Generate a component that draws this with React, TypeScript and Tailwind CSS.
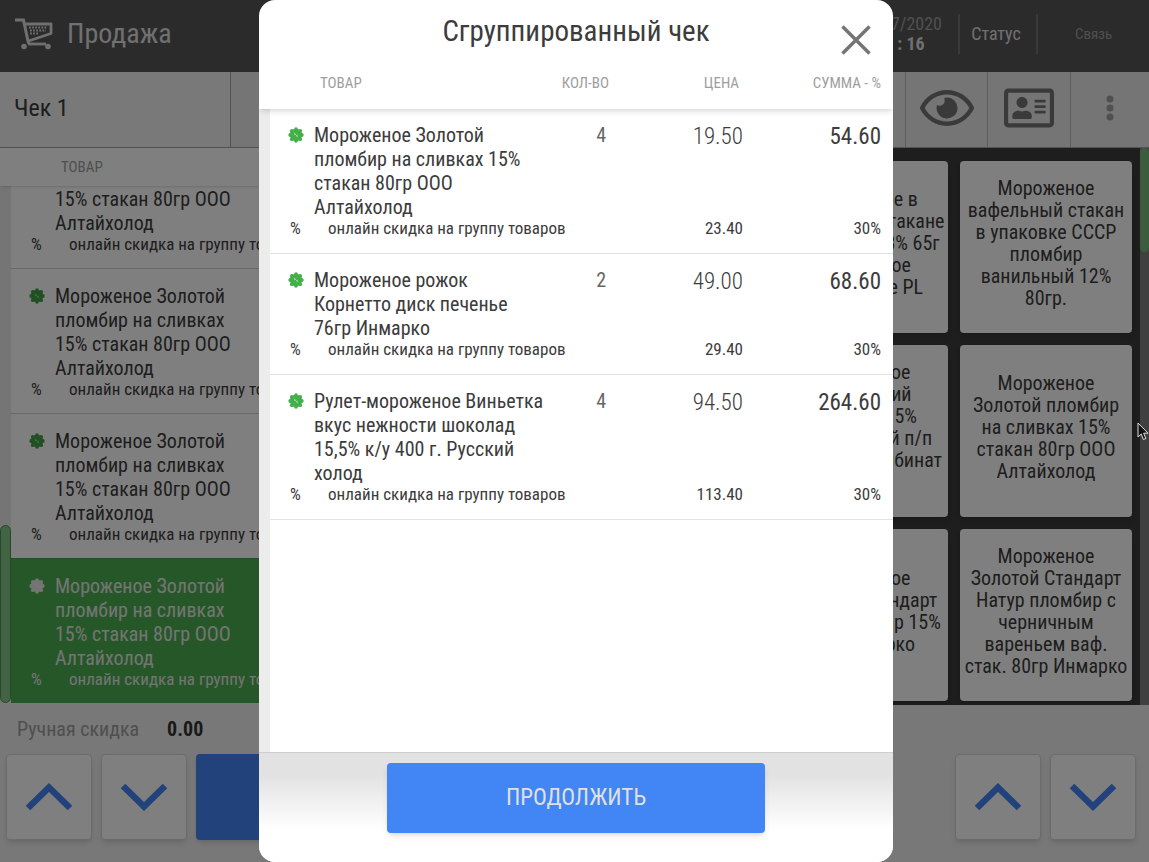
import { FaRegAddressCard, FaRegEye } from 'react-icons/fa';
import { clsx } from 'clsx';

type Item = {
  name: string;
  qty: string;
  price: string;
  total: string;
  discount: string;
};

const DISCOUNT_NAME = 'онлайн скидка на группу товаров';

const groupedItems: Item[] = [
  {
    name: 'Мороженое Золотой пломбир на сливках 15% стакан 80гр ООО Алтайхолод',
    qty: '4',
    price: '19.50',
    total: '54.60',
    discount: '23.40',
  },
  {
    name: 'Мороженое рожок Корнетто диск печенье 76гр Инмарко',
    qty: '2',
    price: '49.00',
    total: '68.60',
    discount: '29.40',
  },
  {
    name: 'Рулет-мороженое Виньетка вкус нежности шоколад 15,5% к/у 400 г. Русский холод',
    qty: '4',
    price: '94.50',
    total: '264.60',
    discount: '113.40',
  },
];

const receiptItems = [
  { id: 1, active: false },
  { id: 2, active: false },
  { id: 3, active: false },
  { id: 4, active: true },
];

const products = [
  'Мороженое в\nвафельном стакане\nпломбир 13,3% 65г\nРоссийское\nМороженое PL',
  'Мороженое\nвафельный стакан\nв упаковке СССР\nпломбир\nванильный 12%\n80гр.',
  'Мороженое\nРоссийский\nпломбир 15%\nшоколадный п/п\nПК Хладокомбинат\n80гр',
  'Мороженое\nЗолотой пломбир\nна сливках 15%\nстакан 80гр ООО\nАлтайхолод',
  'Мороженое\nЗолотой Стандарт\nКрем пломбир 15%\n80г Инмарко',
  'Мороженое\nЗолотой Стандарт\nНатур пломбир с\nчерничным\nвареньем ваф.\nстак. 80гр Инмарко',
];

function CartIcon() {
  return (
    <svg width="38" height="32" viewBox="0 0 38 32" fill="none" stroke="currentColor" aria-hidden="true">
      <path d="M0 2h8.500l5 23.500" strokeWidth="3" />
      <path d="M10.500 6H36v9.500L13.500 23" strokeWidth="2.800" strokeLinejoin="round" />
      <path d="M13 26h18" strokeWidth="2.800" />
      <path d="M14 9.500h18M15 12.500h16M15 15.500h9" strokeWidth="1.800" strokeDasharray="1.800 1.300" />
      <circle cx="9" cy="28.500" r="2.800" fill="currentColor" stroke="none" />
      <circle cx="33" cy="28.500" r="2.800" fill="currentColor" stroke="none" />
    </svg>
  );
}

function BadgeIcon({ className }: { className?: string }) {
  return (
    <svg viewBox="0 0 16 16" fill="currentColor" className={clsx('size-4', className)} aria-hidden="true">
      <circle cx="8" cy="8" r="6.200" />
      <circle cx="13.800" cy="8" r="1.900" />
      <circle cx="12.200" cy="12.200" r="1.900" />
      <circle cx="8" cy="13.800" r="1.900" />
      <circle cx="3.800" cy="12.200" r="1.900" />
      <circle cx="2.200" cy="8" r="1.900" />
      <circle cx="3.800" cy="3.800" r="1.900" />
      <circle cx="8" cy="2.200" r="1.900" />
      <circle cx="12.200" cy="3.800" r="1.900" />
      <path d="M6 5.800l4 4.400M6.200 8l1.200-1.200M8.600 9.200l1.200-1.200" stroke="#fff" strokeOpacity=".45" />
    </svg>
  );
}

function Chevron({ down = false }: { down?: boolean }) {
  return (
    <svg width="48" height="28" viewBox="0 0 48 28" fill="none" aria-hidden="true">
      <path d={down ? 'M3 3l21 20.500L45 3' : 'M3 25L24 4.500 45 25'} stroke="#4285f4" strokeWidth="6.500" />
    </svg>
  );
}

function ArrowButton({ down = false, label }: { down?: boolean; label: string }) {
  return (
    <button
      aria-label={label}
      className="flex size-[86px] shrink-0 items-center justify-center rounded border border-[#d8d8d8] bg-white shadow-md"
    >
      <Chevron down={down} />
    </button>
  );
}

function Header() {
  return (
    <header className="flex h-[72px] shrink-0 items-center justify-between bg-[#565656] pb-1 text-[#e0e0e0]">
      <div className="flex items-center gap-3.5 pl-[15px]">
        <CartIcon />
        <h1 className="text-[28px]">Продажа</h1>
      </div>
      <div className="flex h-10 items-center">
        <div className="pr-4 text-center">
          <p className="text-lg leading-5 text-[#a0a0a0]">17/07/2020</p>
          <p className="text-lg leading-5 font-bold">12 : 16</p>
        </div>
        <p className="flex h-10 w-20 items-center justify-center border-x-2 border-[#757575] pr-1 text-lg">Статус</p>
        <p className="w-[111px] text-center text-[15px] text-[#a0a0a0]">Связь</p>
      </div>
    </header>
  );
}

function Toolbar() {
  return (
    <div className="flex h-[76px] shrink-0 justify-between border-b border-[#a8a8a8] bg-[#eaeaea]">
      <button className="w-[231px] border-r border-[#a8a8a8] bg-[#f2f2f2] pb-1 pl-3.5 text-left text-2xl">Чек 1</button>
      <div className="flex text-[#757575]">
        <button aria-label="Просмотр" className="flex w-[82px] items-center justify-center border-l border-[#bdbdbd] pb-1">
          <FaRegEye className="size-[54px]" />
        </button>
        <button aria-label="Карта клиента" className="flex w-[83px] items-center justify-center border-l border-[#bdbdbd] pb-1">
          <FaRegAddressCard className="size-[50px]" />
        </button>
        <button aria-label="Меню" className="flex w-[79px] items-center justify-center border-l border-[#bdbdbd] pb-1 text-[#a0a0a0]">
          <svg width="8" height="26" viewBox="0 0 8 26" fill="currentColor" aria-hidden="true">
            <circle cx="4" cy="4" r="3.500" />
            <circle cx="4" cy="13" r="3.500" />
            <circle cx="4" cy="22" r="3.500" />
          </svg>
        </button>
      </div>
    </div>
  );
}

function Receipt() {
  return (
    <section className="flex min-h-0 w-1/2 flex-col bg-[#f2f2f2]">
      <p className="z-10 h-[38px] shrink-0 bg-white pl-[61px] text-[15px] leading-[38px] text-[#9e9e9e] shadow">ТОВАР</p>
      <div className="mb-0.5 flex min-h-0 flex-1">
        <div className="flex w-[11px] shrink-0 flex-col justify-end bg-[#eaeaea]">
          <div className="h-[178px] rounded-md border border-[#4c8f50] bg-[#86c889]" />
        </div>
        <ul className="flex flex-1 flex-col justify-end overflow-hidden bg-white">
          {receiptItems.map((item) => (
            <li
              key={item.id}
              className={clsx(
                'shrink-0 border-t pt-[15px] pb-[15px]',
                item.active ? 'border-[#43a047] bg-[#4caf50] text-[#e8e8e8]' : 'border-[#d0d0d0]',
              )}
            >
              <div className="flex">
                <div className="w-11 pt-1 pl-[18px]">
                  <BadgeIcon className={item.active ? 'text-[#e8e8e8]' : 'text-[#43a047]'} />
                </div>
                <p className="w-[200px] text-xl leading-6">{groupedItems[0].name}</p>
              </div>
              <div className="flex text-[17px] leading-[18px]">
                <span className="w-[58px] pl-5">%</span>
                <span>{DISCOUNT_NAME}</span>
              </div>
            </li>
          ))}
        </ul>
      </div>
    </section>
  );
}

function ProductGrid() {
  return (
    <section className="flex min-h-0 w-1/2 justify-end bg-[#3c3c3c]">
      <div className="grid grid-cols-[172px_172px] content-start gap-3 overflow-hidden pt-[13px] pr-2">
        {products.map((product) => (
          <button
            key={product}
            className="h-[172px] rounded bg-white pb-2 text-xl leading-[22px] whitespace-pre-line shadow-md"
          >
            {product}
          </button>
        ))}
      </div>
      <div className="w-[9px] bg-[#808080]">
        <div className="h-[104px] rounded-md bg-[#77b87a]" />
      </div>
    </section>
  );
}

function BottomBar() {
  return (
    <footer className="flex h-[157px] shrink-0 items-end justify-between bg-[#f0f0f0] px-1.5 pb-[22px]">
      <div>
        <p className="flex h-[49px] gap-7 pt-3 pl-[11px] text-xl leading-6 text-[#9e9e9e]">
          Ручная скидка <b className="text-[#333]">0.00</b>
        </p>
        <div className="flex gap-[9px]">
          <ArrowButton label="Предыдущая позиция" />
          <ArrowButton down label="Следующая позиция" />
          <button aria-label="Оплата" className="w-[180px] rounded bg-[#4285f4] shadow-md" />
        </div>
      </div>
      <div className="flex gap-[9px] pr-[7px]">
        <ArrowButton label="Прокрутить вверх" />
        <ArrowButton down label="Прокрутить вниз" />
      </div>
    </footer>
  );
}

function GroupedReceiptDialog() {
  return (
    <div
      role="dialog"
      aria-modal="true"
      aria-labelledby="dialog-title"
      className="flex h-full w-full max-w-[634px] flex-col overflow-hidden rounded-2xl bg-white"
    >
      <div className="grid h-16 shrink-0 grid-cols-[1fr_auto_1fr] items-center">
        <h2 id="dialog-title" className="col-start-2 text-[29px]">
          Сгруппированный чек
        </h2>
        <button aria-label="Закрыть" className="mt-4 mr-[22px] justify-self-end">
          <svg width="30" height="30" viewBox="0 0 30 30" stroke="#757575" strokeWidth="3.500" aria-hidden="true">
            <path d="M1.500 1.500l27 27M28.500 1.500l-27 27" />
          </svg>
        </button>
      </div>

      <div className="min-h-0 flex-1 overflow-hidden bg-[linear-gradient(to_right,#ececec_11px,#fff_11px)]">
        <table className="w-full table-fixed border-separate border-spacing-0">
          <colgroup>
            <col className="w-[11px]" />
            <col className="w-11" />
            <col />
            <col className="w-[53px]" />
            <col className="w-[134px]" />
            <col className="w-[150px]" />
          </colgroup>
          <thead className="bg-white text-[15px] text-[#9e9e9e] shadow-md">
            <tr className="h-[45px]">
              <th />
              <th />
              <th className="pb-1.5 pl-1.5 text-left font-normal">ТОВАР</th>
              <th className="pb-1.5 text-right font-normal">КОЛ-ВО</th>
              <th className="pr-1 pb-1.5 text-right font-normal">ЦЕНА</th>
              <th className="pr-3 pb-1.5 text-right font-normal">СУММА - %</th>
            </tr>
          </thead>
          {groupedItems.map((item) => (
            <tbody key={item.name}>
              <tr className="align-top">
                <td />
                <td className="pt-[18px] pl-[18px]">
                  <BadgeIcon className="text-[#43b04a]" />
                </td>
                <td className="pt-3.5 pr-2.5 text-xl leading-6">{item.name}</td>
                <td className="pt-3.5 pr-[3px] text-right text-xl leading-6 text-[#666]">{item.qty}</td>
                <td className="pt-3.5 text-right text-[23px] leading-7 font-light">{item.price}</td>
                <td className="pt-3.5 pr-3 text-right text-[23px] leading-7">{item.total}</td>
              </tr>
              <tr className="text-[17px] leading-[18px]">
                <td />
                <td className="border-b border-[#e2e2e2] pb-4 pl-5">%</td>
                <td colSpan={2} className="border-b border-[#e2e2e2] pb-4 pl-3.5">
                  {DISCOUNT_NAME}
                </td>
                <td className="border-b border-[#e2e2e2] pb-4 text-right">{item.discount}</td>
                <td className="border-b border-[#e2e2e2] pr-3 pb-4 text-right">30%</td>
              </tr>
            </tbody>
          ))}
        </table>
      </div>

      <div className="flex h-[110px] shrink-0 justify-center border-t border-[#cfcfcf] bg-linear-to-b from-[#e2e2e2] from-20% to-white to-70% pt-2.5">
        <button className="h-[70px] w-[378px] rounded bg-[#4285f4] text-[23px] text-[#e0e0e0] shadow-md">ПРОДОЛЖИТЬ</button>
      </div>
    </div>
  );
}

export default function App() {
  return (
    <div className="relative flex h-screen flex-col overflow-hidden font-['Roboto_Condensed','Roboto',sans-serif] text-[#3c3c3c]">
      <Header />
      <Toolbar />
      <main className="flex min-h-0 flex-1">
        <Receipt />
        <ProductGrid />
      </main>
      <BottomBar />

      {/* Modal */}
      <div className="absolute inset-0 z-20 flex justify-center bg-black/50 pl-[3px]">
        <GroupedReceiptDialog />
      </div>

      {/* Cursor */}
      <svg
        width="12"
        height="19"
        viewBox="0 0 12 19"
        className="absolute top-[422px] right-0 z-30"
        fill="#111"
        stroke="#ddd"
        aria-hidden="true"
      >
        <path d="M1 1v14l3.200-3 2.200 5.500 2.500-1-2.300-5.300H11z" />
      </svg>
    </div>
  );
}
